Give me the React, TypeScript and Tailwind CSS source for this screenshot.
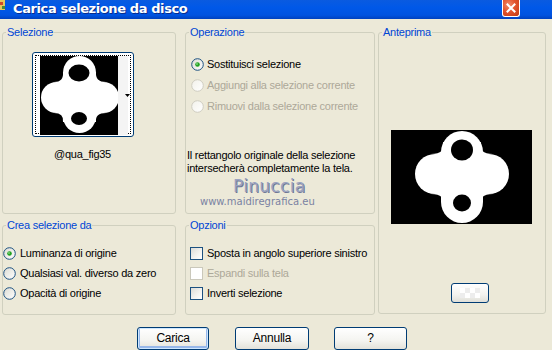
import React from "react";

const Radio = ({ checked = false, disabled = false }: { checked?: boolean; disabled?: boolean }) => (
  <svg width="13" height="13" viewBox="0 0 13 13" className="shrink-0">
    <defs>
      <linearGradient id={disabled ? "rgd" : "rg"} x1="0" y1="0" x2="1" y2="1">
        <stop offset="0" stopColor={disabled ? "#F2F1EA" : "#DCDBD3"} />
        <stop offset="1" stopColor="#FFFFFF" />
      </linearGradient>
    </defs>
    <circle cx="6.5" cy="6.5" r="5.8" fill={`url(#${disabled ? "rgd" : "rg"})`} stroke={disabled ? "#CFCDC1" : "#1C5180"} strokeWidth="1" />
    {checked && <circle cx="6.5" cy="6.5" r="2.3" fill="#21A121" />}
    {checked && <circle cx="6" cy="6" r="0.9" fill="#7FD57F" />}
  </svg>
);

const Check = ({ disabled = false }: { disabled?: boolean }) => (
  <div
    className={
      disabled
        ? "w-[13px] h-[13px] shrink-0 border border-[#CAC8BB] bg-[#FFFFFF]"
        : "w-[13px] h-[13px] shrink-0 border border-[#1C5180] bg-[linear-gradient(135deg,#DCDCD7_0%,#F4F4F1_60%,#FFFFFF_100%)]"
    }
  />
);

const Group = ({
  title,
  className,
  children,
}: {
  title: string;
  className: string;
  children?: React.ReactNode;
}) => (
  <div className={`relative border border-[#D0D0BF] rounded-[3px] ${className}`}>
    <span className="absolute -top-[8px] left-[3px] px-[1px] bg-[#ECE9D8] text-[#0046D5] leading-[14px]">
      {title}
    </span>
    {children}
  </div>
);

const PreviewShape = () => (
  <svg width={141} height={94} viewBox="0 0 141 94" className="block">
    <rect x="0" y="0" width="141" height="94" fill="#000" />
    <g fill="#fff">
      <rect x="24" y="24" width="94" height="40" rx="20" />
      <rect x="50" y="1" width="42" height="92" rx="21" />
      <path d="M40 24 Q55 24 52 12 L90 12 Q87 24 102 24 Z" />
      <path d="M40 64 Q55 64 52 76 L90 76 Q87 64 102 64 Z" />
    </g>
    <ellipse cx="71" cy="20" rx="11" ry="10.5" fill="#000" />
    <ellipse cx="71" cy="73" rx="9" ry="8.5" fill="#000" />
  </svg>
);

const ThumbShape = () => (
  <svg width={78} height={79} viewBox="0 0 78 79" className="block">
    <rect x="0" y="0" width="78" height="79" fill="#000" />
    <g fill="#fff">
      <rect x="1" y="26" width="78" height="31" rx="15.5" />
      <rect x="23" y="0" width="33" height="77" rx="16.5" />
      <path d="M14 26 Q24 26 23 16 L56 16 Q55 26 66 26 Z" />
      <path d="M14 57 Q24 57 23 66 L56 66 Q55 57 66 57 Z" />
    </g>
    <ellipse cx="39" cy="17" rx="10.5" ry="8.5" fill="#000" />
    <ellipse cx="39" cy="62.5" rx="8" ry="6.5" fill="#000" />
  </svg>
);

const Btn = ({ label, def = false, className = "" }: { label: string; def?: boolean; className?: string }) => (
  <div
    className={`h-[23px] rounded-[3px] border border-[#003C74] bg-[linear-gradient(180deg,#FFFFFF_0%,#F4F4F0_60%,#E3E2DA_100%)] flex items-center justify-center text-black text-[12px] ${className} ${
      def ? "shadow-[inset_0_0_0_1px_#CEE7FF,inset_0_-1px_0_2px_#98B8EA]" : ""
    }`}
  >
    {label}
  </div>
);

export default function App() {
  return (
    <div
      className="relative w-[552px] h-[350px] overflow-hidden bg-[#ECE9D8] text-[11px] leading-[13px] tracking-[-0.25px] text-black whitespace-nowrap"
      style={{ fontFamily: '"Liberation Sans", Arial, sans-serif' }}
    >
      {/* Title bar */}
      <div className="h-[19px] bg-[linear-gradient(180deg,#0A5BE0_0%,#0058E8_40%,#0053E0_80%,#0041BE_100%)] flex items-center relative">
        <svg width="7" height="12" viewBox="0 0 7 12" className="absolute left-0 top-0">
          <rect x="0" y="0" width="5" height="10" fill="#E8C75A" />
          <rect x="0" y="2" width="3" height="3" fill="#D04A2A" />
          <rect x="2" y="6" width="3" height="3" fill="#4A8A3A" />
        </svg>
        <span
          className="ml-[13px] text-white font-bold text-[13px] leading-[15px] -mt-[2px] [text-shadow:1px_1px_0_#0A2C8C]"
          style={{ fontFamily: '"DejaVu Sans", "Liberation Sans", sans-serif', letterSpacing: "-0.4px" }}
        >
          Carica selezione da disco
        </span>
        <div className="absolute left-[502px] top-0 w-[18px] h-[17px] rounded-b-[3px] border border-white border-t-0 bg-[radial-gradient(circle_at_35%_30%,#F08A6A_0%,#E2542E_45%,#C23A12_100%)] flex items-center justify-center">
          <svg width="10" height="10" viewBox="0 0 10 10">
            <path d="M1.5 1.5 L8.5 8.5 M8.5 1.5 L1.5 8.5" stroke="#fff" strokeWidth="2" strokeLinecap="square" />
          </svg>
        </div>
      </div>

      {/* Body */}
      <div className="flex pt-[13px] pl-[2px]">
        {/* Column 1 */}
        <div className="flex flex-col w-[174px]">
          <Group title="Selezione" className="h-[182px]">
            <div className="ml-[29px] mt-[19px] w-[102px] h-[85px] rounded-[3px] border border-[#003C74] bg-white p-[2px]">
              <div className="w-full h-full border border-dotted border-black flex">
                <div className="ml-[4px] mt-[0px]">
                  <ThumbShape />
                </div>
                <div className="relative w-[10px] h-[79px] bg-[#F4F4F4]">
                  <svg width="5" height="3" viewBox="0 0 5 3" className="absolute left-[7px] top-[38px]">
                    <path d="M0 0 H5 L2.5 3 Z" fill="#000" />
                  </svg>
                </div>
              </div>
            </div>
            <div className="ml-[51px] mt-[11px]">@qua_fig35</div>
          </Group>

          <Group title="Crea selezione da" className="mt-[11px] h-[90px]">
            <div className="flex flex-col gap-[7px] mt-[21px] ml-[0px]">
              <div className="flex items-center gap-[4px]">
                <Radio checked />
                <span>Luminanza di origine</span>
              </div>
              <div className="flex items-center gap-[4px]">
                <Radio />
                <span>Qualsiasi val. diverso da zero</span>
              </div>
              <div className="flex items-center gap-[4px]">
                <Radio />
                <span>Opacità di origine</span>
              </div>
            </div>
          </Group>
        </div>

        {/* Column 2 */}
        <div className="flex flex-col w-[190px] ml-[9px]">
          <Group title="Operazione" className="h-[182px] relative">
            <div className="flex flex-col gap-[8px] mt-[25px] ml-[5px]">
              <div className="flex items-center gap-[3px]">
                <Radio checked />
                <span>Sostituisci selezione</span>
              </div>
              <div className="flex items-center gap-[3px] text-[#ACA899]">
                <Radio disabled />
                <span>Aggiungi alla selezione corrente</span>
              </div>
              <div className="flex items-center gap-[3px] text-[#ACA899]">
                <Radio disabled />
                <span>Rimuovi dalla selezione corrente</span>
              </div>
            </div>
            <div className="ml-[1px] mt-[36px]">
              Il rettangolo originale della selezione
              <br />
              intersecherà completamente la tela.
            </div>
            <div
              className="absolute left-[47px] top-[145px] text-[17px] leading-[17px] text-[#9AA2C0] tracking-[0.3px] [text-shadow:1px_1px_0_#6E7696]"
              style={{ fontFamily: '"DejaVu Sans", sans-serif' }}
            >
              Pinuccia
            </div>
            <div
              className="absolute left-[14px] top-[163px] text-[10px] leading-[11px] text-[#7A82A2] tracking-[0px]"
              style={{ fontFamily: '"DejaVu Sans", sans-serif' }}
            >
              www.maidiregrafica.eu
            </div>
          </Group>

          <Group title="Opzioni" className="mt-[11px] h-[90px]">
            <div className="flex flex-col gap-[7px] mt-[21px] ml-[4px]">
              <div className="flex items-center gap-[4px]">
                <Check />
                <span>Sposta in angolo superiore sinistro</span>
              </div>
              <div className="flex items-center gap-[4px] text-[#ACA899]">
                <Check disabled />
                <span>Espandi sulla tela</span>
              </div>
              <div className="flex items-center gap-[4px]">
                <Check />
                <span>Inverti selezione</span>
              </div>
            </div>
          </Group>
        </div>

        {/* Column 3 */}
        <div className="ml-[3px] w-[168px]">
          <Group title="Anteprima" className="h-[282px]">
            <div className="ml-[12px] mt-[97px]">
              <PreviewShape />
            </div>
            <div className="ml-[72px] mt-[59px] w-[38px] h-[20px] rounded-[3px] border border-[#003C74] bg-[linear-gradient(180deg,#FFFFFF_0%,#F2F2EE_60%,#E0DFD8_100%)] flex items-center justify-center">
              <div className="w-[20px] h-[10px] bg-[conic-gradient(#EDEDED_25%,#FFFFFF_0_50%,#EDEDED_0_75%,#FFFFFF_0)] bg-[length:10px_10px]" />
            </div>
          </Group>
        </div>
      </div>

      {/* Buttons */}
      <div className="flex mt-[12px] ml-[137px]">
        <Btn label="Carica" def className="w-[72px]" />
        <Btn label="Annulla" className="w-[74px] ml-[26px]" />
        <Btn label="?" className="w-[73px] ml-[25px]" />
      </div>
    </div>
  );
}
